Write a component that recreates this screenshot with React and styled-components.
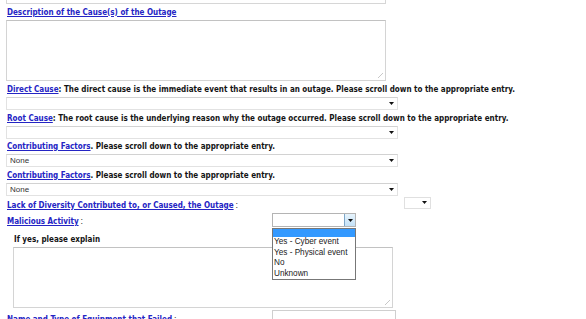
import React from "react";
import { styled, createGlobalStyle } from "styled-components";

// базовые стили страницы
const GlobalStyle = createGlobalStyle`
  body {
    margin: 0;
    background: #ffffff;
    font-family: "DejaVu Sans Condensed", "DejaVu Sans", sans-serif;
    font-stretch: condensed;
  }
`;

const causeFields = [
  {
    link: "Direct Cause",
    text: ": The direct cause is the immediate event that results in an outage. Please scroll down to the appropriate entry.",
    value: "",
  },
  {
    link: "Root Cause",
    text: ": The root cause is the underlying reason why the outage occurred. Please scroll down to the appropriate entry.",
    value: "",
  },
  {
    link: "Contributing Factors",
    text: ". Please scroll down to the appropriate entry.",
    value: "None",
  },
  {
    link: "Contributing Factors",
    text: ". Please scroll down to the appropriate entry.",
    value: "None",
  },
];

const maliciousOptions = ["Yes - Cyber event", "Yes - Physical event", "No", "Unknown"];

const Arrow = () => (
  <svg width="5" height="3" viewBox="0 0 5 3">
    <path d="M0 0 H5 L2.5 3 Z" fill="#111" />
  </svg>
);

const Dropdown = ({ value, width = 392 }) => (
  <SelectBox $width={width}>
    <SelectValue>{value}</SelectValue>
    <ArrowSlot>
      <Arrow />
    </ArrowSlot>
  </SelectBox>
);

const App = () => {
  return (
    <>
      <GlobalStyle />
      <Page>
        <CutBox />
        <FieldLabel $top={1.5}>
          <Link>Description of the Cause(s) of the Outage</Link>
        </FieldLabel>
        <Area $width={380} $height={61} />

        <Groups>
          {causeFields.map((f, i) => (
            <Group key={i}>
              <FieldLabel>
                <Link>{f.link}</Link>
                {f.text}
              </FieldLabel>
              <Dropdown value={f.value} />
            </Group>
          ))}
        </Groups>

        <Row $labelWidth={398} $height={15} $top={2.5}>
          <FieldLabel>
            <Link>Lack of Diversity Contributed to, or Caused, the Outage</Link>
            <Colon>:</Colon>
          </FieldLabel>
          <SmallSelect>
            <Arrow />
          </SmallSelect>
        </Row>

        <Row $labelWidth={266} $height={15} $top={1}>
          <FieldLabel>
            <Link>Malicious Activity</Link>
            <Colon>:</Colon>
          </FieldLabel>
          <OpenSelect>
            <OpenButton>
              <Arrow />
            </OpenButton>
            <OptionList>
              <Option $active />
              {maliciousOptions.map((o) => (
                <Option key={o}>{o}</Option>
              ))}
            </OptionList>
          </OpenSelect>
        </Row>

        <SubLabel>If yes, please explain</SubLabel>
        <Area $width={380} $height={61} $indent={7} />

        <Row $labelWidth={266} $height={15} $top={4}>
          <FieldLabel>
            <Link>Name and Type of Equipment that Failed</Link>
            <Colon>:</Colon>
          </FieldLabel>
          <TextBox />
        </Row>
      </Page>
    </>
  );
};

export default App;

const Page = styled.div`
  padding-left: 6px;
  width: 560px;
`;

const CutBox = styled.div`
  width: 378px;
  height: 3px;
  border: 1px solid #d6d6d6;
  border-top: none;
`;

const FieldLabel = styled.div`
  font-size: 8px;
  font-weight: bold;
  line-height: 14px;
  color: #141414;
  padding-left: 1px;
  white-space: nowrap;
  margin-top: ${(p) => p.$top || 0}px;
`;

const Link = styled.a`
  color: #2424c4;
  text-decoration: underline;
  cursor: pointer;
`;

const Colon = styled.span`
  font-family: "Liberation Sans", sans-serif;
  font-weight: normal;
  font-size: 9px;
  color: #333;
  margin-left: 2px;
`;

const Area = styled.textarea`
  display: block;
  box-sizing: border-box;
  width: ${(p) => p.$width}px;
  height: ${(p) => p.$height}px;
  margin: 0 0 0 ${(p) => p.$indent || 0}px;
  border: 1px solid #d4d4d4;
  border-top-color: #c2c2c2;
  background:
    linear-gradient(135deg, transparent 45%, #c8c8c8 45%, #c8c8c8 55%, transparent 55%) right 2px bottom 2px / 5px 5px no-repeat,
    #fff;
  resize: none;
  outline: none;
`;

const Groups = styled.div`
  margin-top: 2.5px;
`;

const Group = styled.div`
  margin-bottom: 1.5px;
`;

const SelectBox = styled.div`
  box-sizing: border-box;
  width: ${(p) => p.$width}px;
  height: 13px;
  border: 1px solid #e2e2e2;
  border-top-color: #d2d2d2;
  background: #fff;
  display: flex;
  align-items: center;
  justify-content: space-between;
  padding: 0 3px 0 3px;
`;

const SelectValue = styled.span`
  font-family: "Liberation Sans", Arial, sans-serif;
  font-size: 8px;
  color: #333;
`;

const ArrowSlot = styled.span`
  display: flex;
  align-items: center;
`;

const Row = styled.div`
  display: grid;
  grid-template-columns: ${(p) => p.$labelWidth}px auto;
  align-items: start;
  height: ${(p) => p.$height}px;
  margin-top: ${(p) => p.$top || 0}px;
`;

const SmallSelect = styled.div`
  box-sizing: border-box;
  width: 27px;
  height: 12px;
  margin-top: -1.5px;
  border: 1px solid #e0e0e0;
  display: flex;
  align-items: center;
  justify-content: flex-end;
  padding-right: 3px;
`;

const OpenSelect = styled.div`
  position: relative;
  box-sizing: border-box;
  width: 84px;
  height: 14px;
  margin-top: -1px;
  border: 1px solid #b4b4b4;
  background: #fff;
  display: flex;
  justify-content: flex-end;
`;

const OpenButton = styled.div`
  box-sizing: border-box;
  width: 11px;
  height: 100%;
  border-left: 1px solid #7ea7c9;
  background: linear-gradient(#e6f3fc, #c4e1f7);
  display: flex;
  align-items: center;
  justify-content: center;
`;

const OptionList = styled.div`
  position: absolute;
  top: 14px;
  left: -1px;
  width: 84px;
  box-sizing: border-box;
  border: 1px solid #777;
  background: #fff;
  z-index: 2;
`;

const Option = styled.div`
  font-family: "Liberation Sans", Arial, sans-serif;
  font-size: 8.2px;
  line-height: ${(p) => (p.$active ? 8 : 10.5)}px;
  height: ${(p) => (p.$active ? 8 : 10.5)}px;
  padding-left: 1px;
  color: #222;
  background: ${(p) => (p.$active ? "#3399ff" : "#fff")};
  white-space: nowrap;
`;

const SubLabel = styled.div`
  font-size: 8px;
  font-weight: bold;
  line-height: 14px;
  color: #141414;
  padding-left: 8px;
  margin-top: 4px;
`;

const TextBox = styled.div`
  box-sizing: border-box;
  width: 124px;
  height: 14px;
  margin-top: -2px;
  border: 1px solid #cfcfcf;
`;
